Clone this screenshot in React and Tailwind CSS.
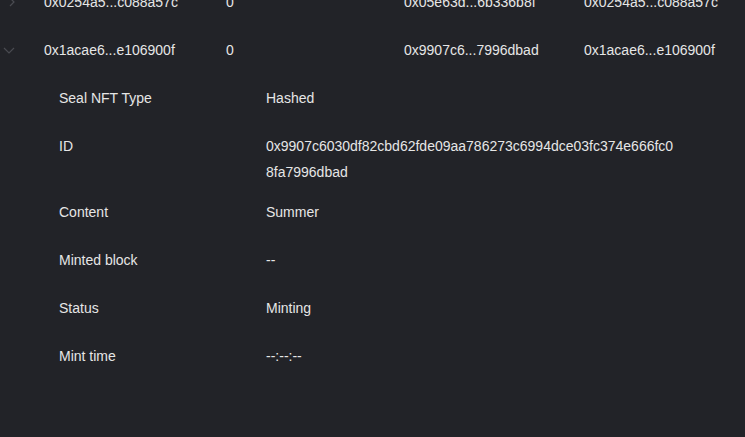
import React from "react";

const font = { fontFamily: '"Liberation Sans", Arial, sans-serif' };

function ChevronRight() {
  return (
    <svg width="6" height="10" viewBox="0 0 6 10" fill="none" className="ml-[9px]">
      <path d="M1 1l4 4-4 4" stroke="#4a4b51" strokeWidth="1.2" />
    </svg>
  );
}

function ChevronDown() {
  return (
    <svg width="12" height="7" viewBox="0 0 12 7" fill="none" className="ml-[3px]">
      <path d="M1 1l5 5 5-5" stroke="#4a4b51" strokeWidth="1.2" />
    </svg>
  );
}

function MainRow({ open, cols }) {
  return (
    <div className="grid grid-cols-[44px_182px_178px_180px_1fr] items-center py-[11px] leading-[26px]">
      <div className="flex items-center">{open ? <ChevronDown /> : <ChevronRight />}</div>
      {cols.map((c, i) => (
        <div key={i} className="whitespace-nowrap">{c}</div>
      ))}
    </div>
  );
}

function Detail({ label, value, extra = "" }) {
  return (
    <div className={"flex pl-[59px] leading-[26px] " + (extra || "py-[11px]")}>
      <div className="w-[207px] shrink-0">{label}</div>
      <div className="w-[410px] break-all">{value}</div>
    </div>
  );
}

export default function App() {
  return (
    <div className="w-[745px] h-[437px] overflow-hidden bg-[#222328] text-[#e6e6e6] text-[14px]" style={font}>
      <div className="-mt-[22px]">
        <MainRow cols={["0x0254a5...c088a57c", "0", "0x05e63d...6b336b8f", "0x0254a5...c088a57c"]} />
        <MainRow open cols={["0x1acae6...e106900f", "0", "0x9907c6...7996dbad", "0x1acae6...e106900f"]} />
        <Detail label="Seal NFT Type" value="Hashed" />
        <Detail
          label="ID"
          value="0x9907c6030df82cbd62fde09aa786273c6994dce03fc374e666fc08fa7996dbad"
          extra="pt-[11px] pb-[3px]"
        />
        <Detail label="Content" value="Summer" />
        <Detail label="Minted block" value="--" />
        <Detail label="Status" value="Minting" />
        <Detail label="Mint time" value="--:--:--" />
      </div>
    </div>
  );
}
